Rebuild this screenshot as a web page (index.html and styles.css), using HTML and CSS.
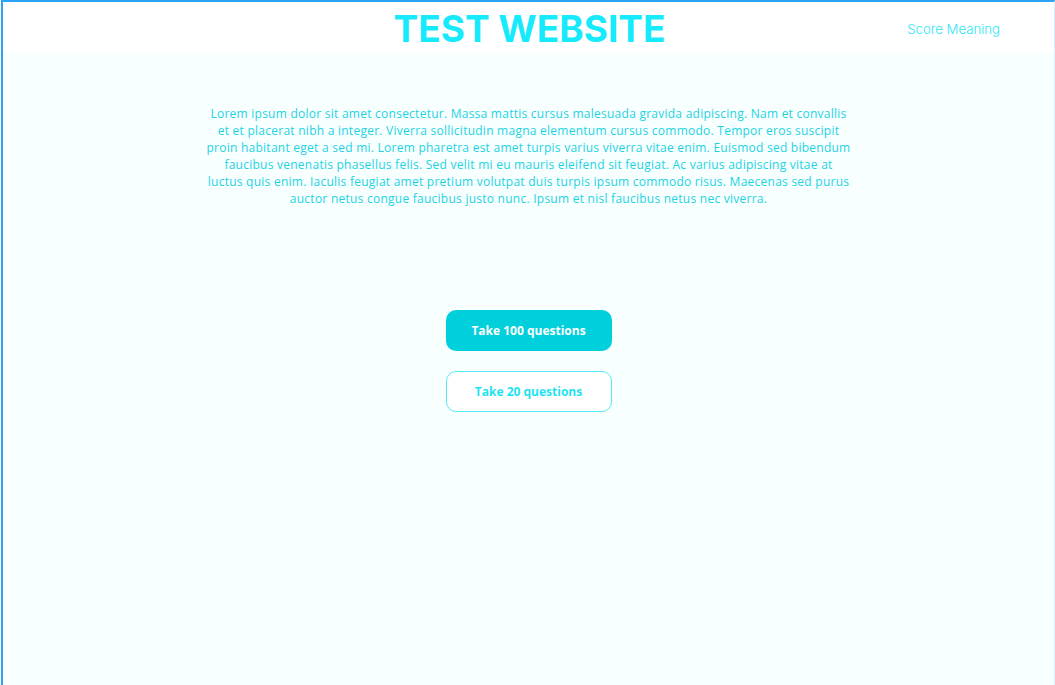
FILE: index.html
```html
<!DOCTYPE html>
<html>
<head>
<meta charset="utf-8">
<link rel="stylesheet" href="styles.css">
</head>
<body>
<div class="frame">
  <header class="header">
    <div class="spacer"></div>
    <h1 class="title">TEST WEBSITE</h1>
    <div class="nav"><a class="nav-link">Score Meaning</a></div>
  </header>
  <main class="main">
    <p class="intro">Lorem ipsum dolor sit amet consectetur. Massa mattis cursus malesuada gravida adipiscing. Nam et convallis<br>et et placerat nibh a integer. Viverra sollicitudin magna elementum cursus commodo. Tempor eros suscipit<br>proin habitant eget a sed mi. Lorem pharetra est amet turpis varius viverra vitae enim. Euismod sed bibendum<br>faucibus venenatis phasellus felis. Sed velit mi eu mauris eleifend sit feugiat. Ac varius adipiscing vitae at<br>luctus quis enim. Iaculis feugiat amet pretium volutpat duis turpis ipsum commodo risus. Maecenas sed purus<br>auctor netus congue faucibus justo nunc. Ipsum et nisl faucibus netus nec viverra.</p>
    <div class="actions">
      <button class="btn btn-primary">Take 100 questions</button>
      <button class="btn btn-outline">Take 20 questions</button>
    </div>
  </main>
</div>
</body>
</html>
```
FILE: styles.css
```css
* { box-sizing: border-box; }
html, body { margin: 0; padding: 0; height: 100%; }
body { background: #ffffff; font-family: "Inter", "Liberation Sans", sans-serif; }
.frame {
  height: 685px;
  margin-left: 1px;
  border-left: 2px solid #2aa3f5;
  border-top: 2px solid #2aa3f5;
  border-right: 1px solid #d8efff;
  background: #f8ffff;
  display: flex;
  flex-direction: column;
}
.header {
  height: 50px;
  background: #ffffff;
  display: grid;
  grid-template-columns: 1fr auto 1fr;
  align-items: center;
}
.title {
  margin: 0;
  font-family: "Inter", sans-serif;
  font-weight: 700;
  font-size: 37px;
  letter-spacing: 0;
  color: #16eafc;
  line-height: 1;
  padding-top: 2px;
  padding-left: 2px;
}
.nav { display: flex; justify-content: flex-end; padding-right: 54px; padding-top: 4px; }
.nav-link { font-family: "Inter", sans-serif; font-weight: 300; font-size: 13.2px; color: #2ee6f5; }
.main { display: flex; flex-direction: column; align-items: center; }
.intro {
  width: 700px;
  margin: 53px 0 0 0;
  text-align: center;
  font-family: "Open Sans", sans-serif;
  font-size: 12px;
  letter-spacing: 0.25px;
  line-height: 17px;
  color: #1dd3e2;
  white-space: nowrap;
}
.actions { display: flex; flex-direction: column; gap: 20px; margin-top: 103px; margin-left: 0; }
.btn {
  width: 166px;
  height: 41px;
  border-radius: 10px;
  font-family: "Open Sans", sans-serif;
  font-weight: 700;
  font-size: 12px;
  cursor: pointer;
}
.btn-primary { background: #00cfdc; color: #ffffff; border: none; }
.btn-outline { background: #ffffff; color: #1de3f1; border: 1px solid #55eaf7; }
```
